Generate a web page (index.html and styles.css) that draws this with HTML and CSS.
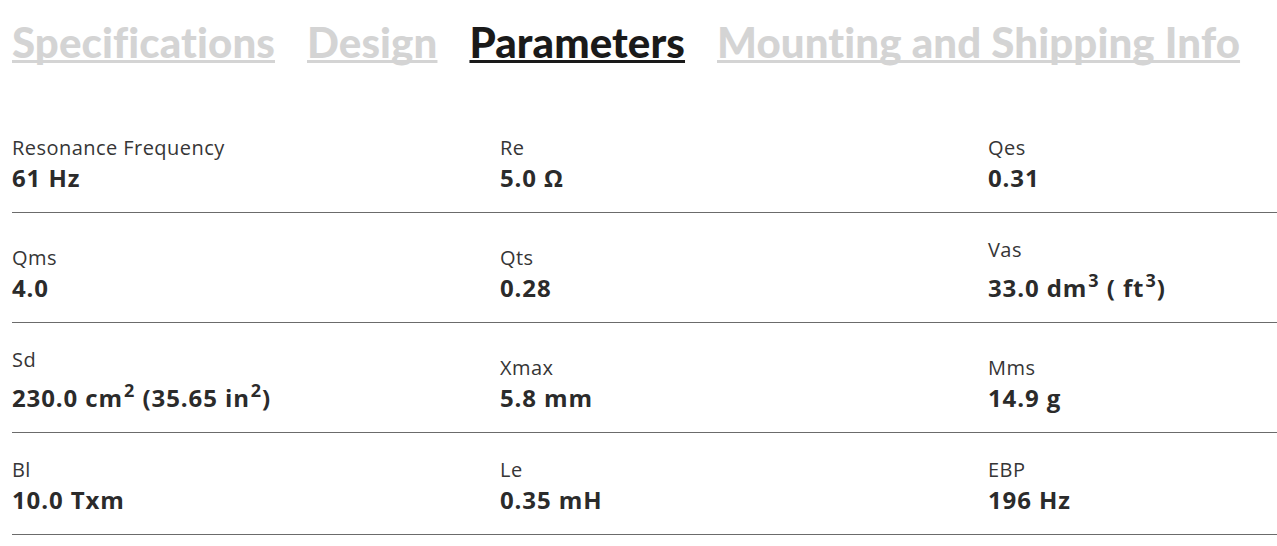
FILE: index.html
```html
<!DOCTYPE html>
<html lang="en">
<head>
<meta charset="utf-8">
<title>Parameters</title>
<link rel="stylesheet" href="styles.css">
</head>
<body>
<nav class="tabs">
  <a class="tab" href="#">Specifications</a>
  <a class="tab" href="#">Design</a>
  <a class="tab active" href="#">Parameters</a>
  <a class="tab" href="#">Mounting and Shipping Info</a>
</nav>
<section class="params">
  <div class="row">
    <div class="cell"><div class="label">Resonance Frequency</div><div class="value">61 Hz</div></div>
    <div class="cell"><div class="label">Re</div><div class="value">5.0 Ω</div></div>
    <div class="cell"><div class="label">Qes</div><div class="value">0.31</div></div>
  </div>
  <div class="row">
    <div class="cell"><div class="label">Qms</div><div class="value">4.0</div></div>
    <div class="cell"><div class="label">Qts</div><div class="value">0.28</div></div>
    <div class="cell"><div class="label">Vas</div><div class="value">33.0 dm<sup>3</sup> ( ft<sup>3</sup>)</div></div>
  </div>
  <div class="row">
    <div class="cell"><div class="label">Sd</div><div class="value">230.0 cm<sup>2</sup> (35.65 in<sup>2</sup>)</div></div>
    <div class="cell"><div class="label">Xmax</div><div class="value">5.8 mm</div></div>
    <div class="cell"><div class="label">Mms</div><div class="value">14.9 g</div></div>
  </div>
  <div class="row">
    <div class="cell"><div class="label">Bl</div><div class="value">10.0 Txm</div></div>
    <div class="cell"><div class="label">Le</div><div class="value">0.35 mH</div></div>
    <div class="cell"><div class="label">EBP</div><div class="value">196 Hz</div></div>
  </div>
</section>
</body>
</html>
```
FILE: styles.css
```css
html, body {
  margin: 0;
  padding: 0;
  background: #ffffff;
}
body {
  padding: 0 0 0 12px;
  font-family: "Open Sans", "Liberation Sans", sans-serif;
  color: #333333;
  overflow: hidden;
}
.tabs {
  display: flex;
  gap: 32px;
  padding-top: 17px;
  height: 67px;
  box-sizing: border-box;
}
.tab {
  font-family: "Lato", "DejaVu Sans", sans-serif;
  font-weight: 900;
  font-size: 42px;
  line-height: 50px;
  letter-spacing: 0.1px;
  color: #d4d4d4;
  text-decoration: underline;
  text-decoration-thickness: 3px;
  text-underline-offset: 1.5px;
  text-decoration-skip-ink: none;
  white-space: nowrap;
}
.tab.active {
  color: #1a1a1a;
}
.params {
  margin-top: 44px;
}
.row {
  display: grid;
  grid-template-columns: 488px 488px 1fr;
  align-items: end;
  padding: 23px 0 18px 0;
  border-bottom: 1px solid #6b6b6b;
}
.label {
  font-size: 20px;
  line-height: 28px;
  letter-spacing: 0.45px;
  color: #363636;
}
.value {
  font-size: 24px;
  font-weight: 700;
  line-height: 32px;
  letter-spacing: 0.9px;
  color: #2b2b2b;
}
.value sup {
  font-size: 18px;
  vertical-align: 10px;
  letter-spacing: 1px;
  margin-left: 1px;
}
```
